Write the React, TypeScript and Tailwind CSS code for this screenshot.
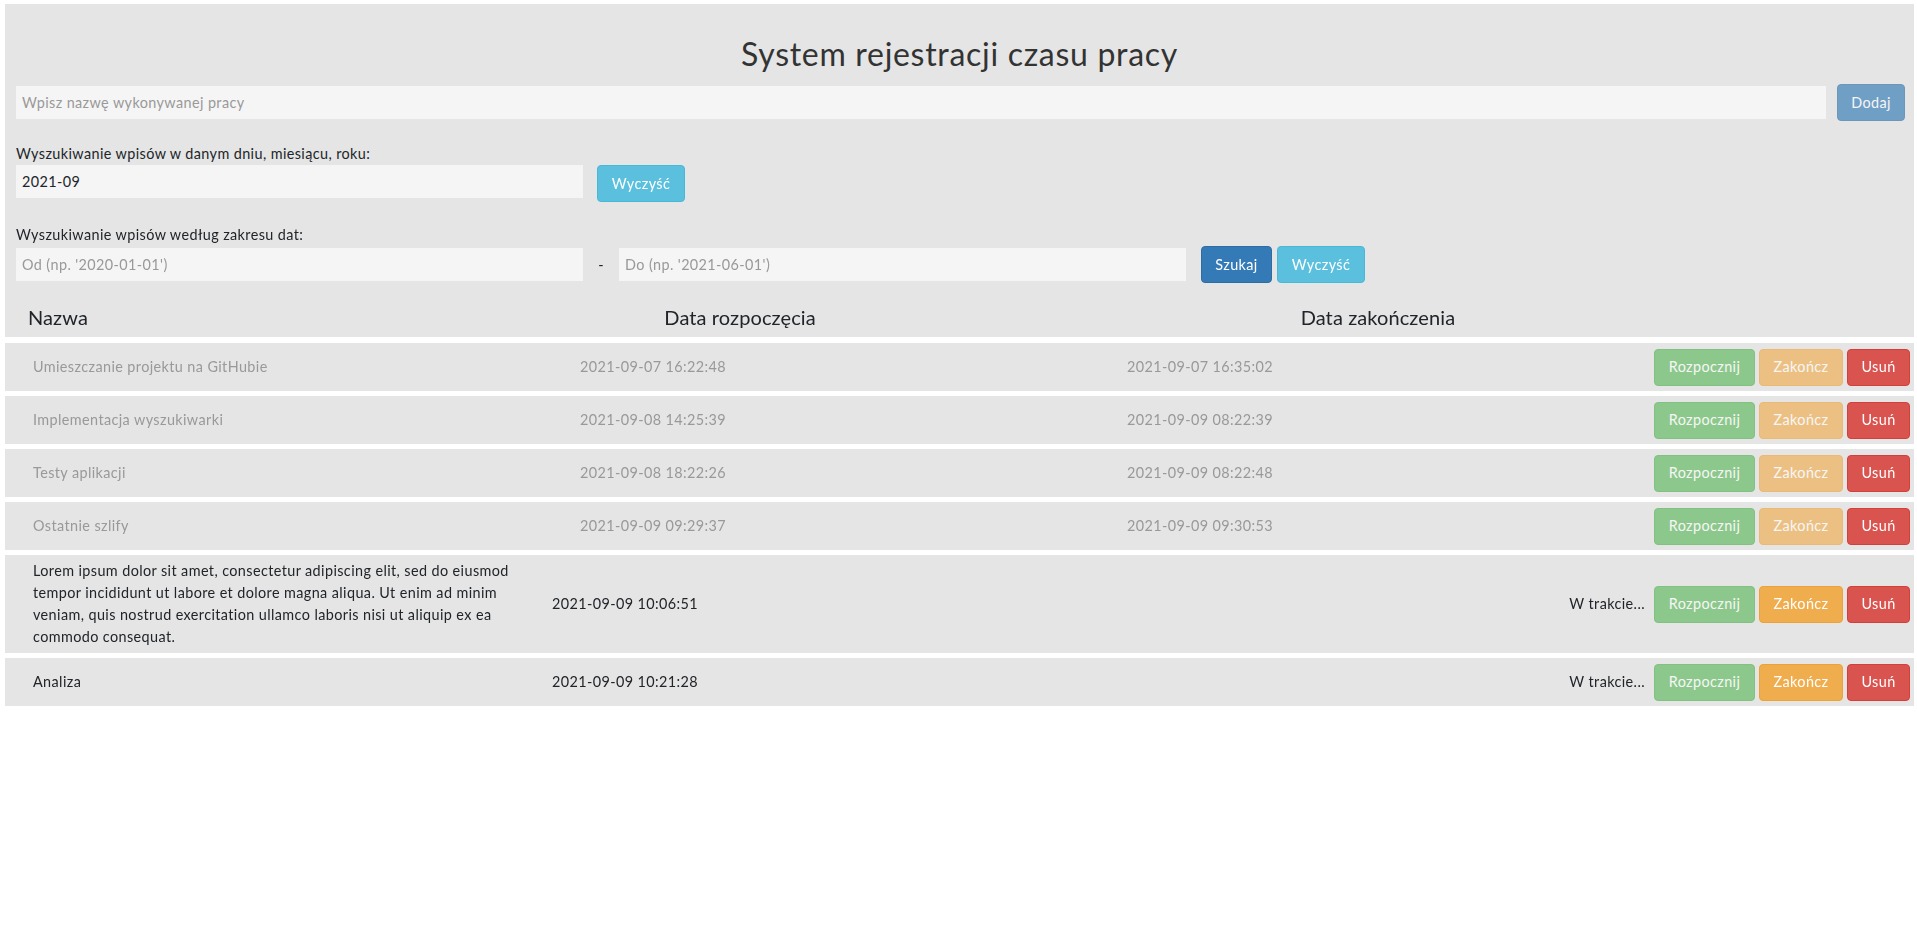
import React from 'react';

type Entry = {
  name: string;
  start: string;
  end?: string;
};

const entries: Entry[] = [
  { name: 'Umieszczanie projektu na GitHubie', start: '2021-09-07 16:22:48', end: '2021-09-07 16:35:02' },
  { name: 'Implementacja wyszukiwarki', start: '2021-09-08 14:25:39', end: '2021-09-09 08:22:39' },
  { name: 'Testy aplikacji', start: '2021-09-08 18:22:26', end: '2021-09-09 08:22:48' },
  { name: 'Ostatnie szlify', start: '2021-09-09 09:29:37', end: '2021-09-09 09:30:53' },
  {
    name: 'Lorem ipsum dolor sit amet, consectetur adipiscing elit, sed do eiusmod tempor incididunt ut labore et dolore magna aliqua. Ut enim ad minim veniam, quis nostrud exercitation ullamco laboris nisi ut aliquip ex ea commodo consequat.',
    start: '2021-09-09 10:06:51',
  },
  { name: 'Analiza', start: '2021-09-09 10:21:28' },
];

const btn =
  'h-[37px] rounded-[4px] border text-white text-[14.4px] tracking-[0.4px] flex items-center justify-center';
const field =
  'h-[33px] bg-[#f5f5f5] px-[6px] text-[14.4px] tracking-[0.4px] text-[#212529] placeholder:text-[#999] outline-none';

// Action buttons shown at the end of every row
function RowActions({ finished }: { finished: boolean }) {
  return (
    <div className="flex items-center gap-[4px]">
      <button className={`${btn} w-[101px] bg-[#5cb85c] border-[#4cae4c] opacity-65`}>Rozpocznij</button>
      <button className={`${btn} w-[84px] bg-[#f0ad4e] border-[#eea236] ${finished ? 'opacity-65' : ''}`}>
        Zakończ
      </button>
      <button className={`${btn} w-[63px] bg-[#d9534f] border-[#d43f3a]`}>Usuń</button>
    </div>
  );
}

function EntryRow({ entry }: { entry: Entry }) {
  if (entry.end) {
    return (
      <div className="h-[48px] flex items-center bg-[#e5e5e5] text-[#999] pr-[4px]">
        <div className="w-[575px] pl-[28px]">{entry.name}</div>
        <div className="w-[547px]">{entry.start}</div>
        <div className="flex-1">{entry.end}</div>
        <RowActions finished />
      </div>
    );
  }
  return (
    <div className="min-h-[48px] flex items-center bg-[#e5e5e5] text-[#212529] pr-[4px] py-[5px]">
      <div className="w-[547px] pl-[28px] pr-[22px] leading-[22px]">{entry.name}</div>
      <div className="flex-1">{entry.start}</div>
      <div className="mr-[9px]">W trakcie...</div>
      <RowActions finished={false} />
    </div>
  );
}

export default function App() {
  return (
    <div className="min-h-screen bg-white pt-[4px] pl-[5px] pr-[3px] font-['Lato','Noto_Sans',sans-serif] text-[14.4px] tracking-[0.4px] text-[#212529]">
      {/* Header panel */}
      <div className="bg-[#e5e5e5]">
        <h1 className="pt-[33px] text-center text-[32px] leading-[34px] tracking-[0.7px] text-[#333]">
          System rejestracji czasu pracy
        </h1>

        <div className="mt-[13px] flex items-center gap-[11px] pl-[11px] pr-[9px]">
          <input className={`${field} flex-1`} placeholder="Wpisz nazwę wykonywanej pracy" />
          <button className={`${btn} w-[68px] bg-[#337ab7] border-[#2e6da4] opacity-65`}>Dodaj</button>
        </div>

        <div className="pl-[11px]">
          <div className="mt-[21px] leading-[23px]">Wyszukiwanie wpisów w danym dniu, miesiącu, roku:</div>
          <div className="flex items-start">
            <input className={`${field} w-[567px]`} defaultValue="2021-09" autoFocus />
            <button className={`${btn} ml-[14px] w-[88px] bg-[#5bc0de] border-[#46b8da]`}>Wyczyść</button>
          </div>

          <div className="mt-[21px] leading-[23px]">Wyszukiwanie wpisów według zakresu dat:</div>
          <div className="flex items-center">
            <input className={`${field} w-[567px]`} placeholder="Od (np. '2020-01-01')" />
            <span className="w-[36px] text-center">-</span>
            <input className={`${field} w-[567px]`} placeholder="Do (np. '2021-06-01')" />
            <button className={`${btn} ml-[15px] w-[71px] bg-[#337ab7] border-[#2e6da4]`}>Szukaj</button>
            <button className={`${btn} ml-[5px] w-[88px] bg-[#5bc0de] border-[#46b8da]`}>Wyczyść</button>
          </div>
        </div>

        {/* Table header */}
        <div className="mt-[13px] h-[41px] grid grid-cols-3 items-center text-[20px] tracking-[0.1px]">
          <div className="pl-[23px]">Nazwa</div>
          <div className="pl-[23px]">Data rozpoczęcia</div>
          <div className="pl-[23px]">Data zakończenia</div>
        </div>
      </div>

      {/* Entries */}
      <div className="mt-[6px] flex flex-col gap-[5px]">
        {entries.map((e) => (
          <EntryRow key={e.start} entry={e} />
        ))}
      </div>
    </div>
  );
}
